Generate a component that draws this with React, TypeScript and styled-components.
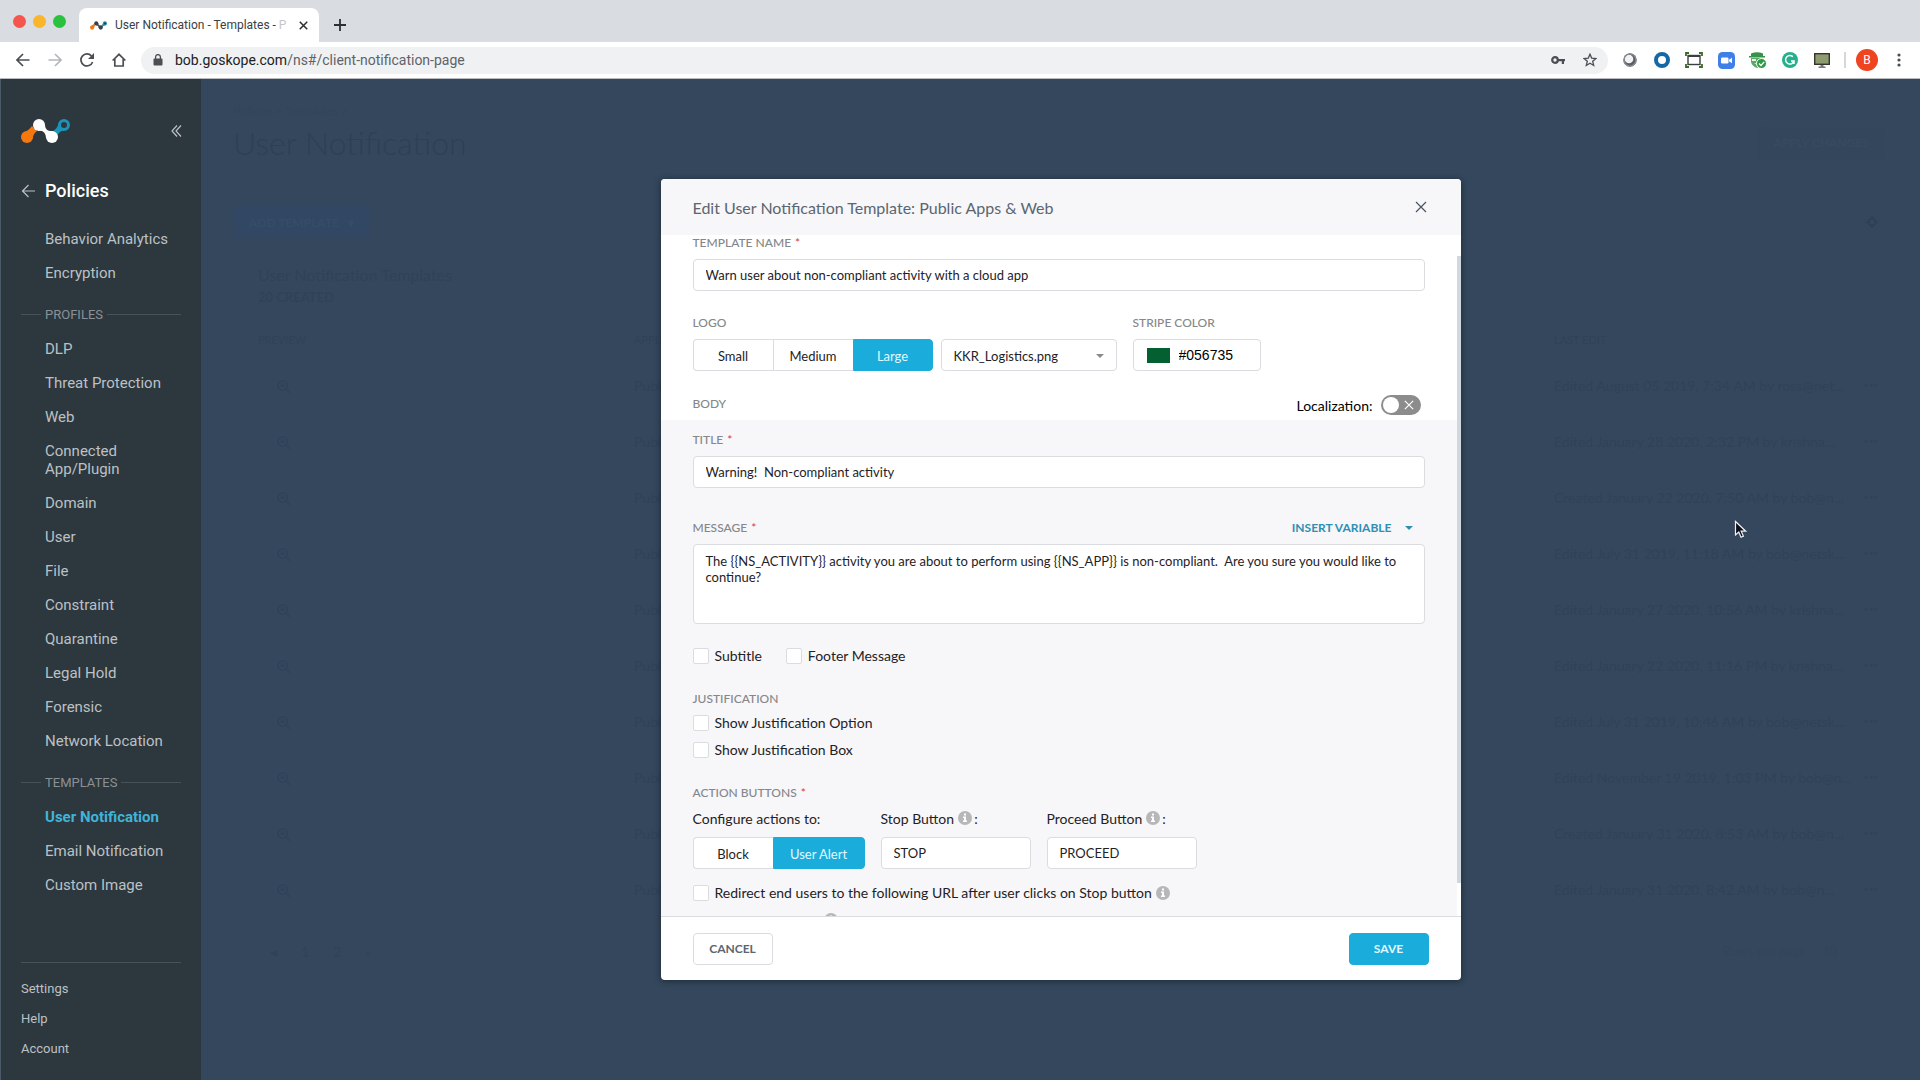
import React, { useLayoutEffect, useRef, useState } from "react";
import styled, { createGlobalStyle, css } from "styled-components";

const lato = `Lato, "Open Sans", sans-serif`;
const roboto = `Roboto, "Noto Sans", sans-serif`;

const GlobalStyle = createGlobalStyle`
  *, *::before, *::after { box-sizing: border-box; }
  body { margin: 0; font-family: ${lato}; background: #35475c; }
  button, input, select, textarea { font: inherit; color: inherit; margin: 0; }
  button { padding: 0; border: 0; background: none; cursor: pointer; }
  svg { display: block; flex: none; }
`;

const Page = styled.div`
  display: flex;
  flex-direction: column;
  min-height: 100vh;
`;

/* ---------- browser window ---------- */

const TabStrip = styled.div`
  display: flex;
  align-items: flex-end;
  height: 42px;
  padding-left: 13px;
  background: #d9dce1;
`;

const WindowButtons = styled.div`
  display: flex;
  gap: 7px;
  height: 42px;
  padding: 15px 13px 0 0;
`;

const WindowDot = styled.span<{ $color: string }>`
  width: 13px;
  height: 13px;
  border-radius: 50%;
  background: ${(p) => p.$color};
`;

const Tab = styled.div`
  display: flex;
  align-items: center;
  gap: 8px;
  width: 240px;
  height: 34px;
  padding: 0 8px 0 11px;
  border-radius: 8px 8px 0 0;
  background: #fff;
`;

const TabTitle = styled.span`
  flex: 1;
  overflow: hidden;
  white-space: nowrap;
  font: 12px/16px ${roboto};
  color: #3c4043;
  i { font-style: normal; color: #c4c6c9; }
`;

const TabAction = styled.button`
  display: grid;
  place-items: center;
  width: 16px;
  height: 34px;
`;

const NewTab = styled(TabAction)`
  margin-left: 13px;
`;

const Toolbar = styled.div`
  display: flex;
  align-items: center;
  height: 37px;
  padding: 0 13px 0 15px;
  border-bottom: 1px solid #b9bdc2;
  background: #fff;
`;

const ToolGroup = styled.div`
  display: flex;
  gap: 16px;
  margin-right: 14px;
`;

const ToolButton = styled.button`
  display: grid;
  place-items: center;
  width: 16px;
  height: 24px;
`;

const Address = styled.div`
  display: flex;
  flex: 1;
  align-items: center;
  gap: 12px;
  height: 27px;
  padding: 0 11px 0 12px;
  border-radius: 14px;
  background: #eff1f3;
`;

const Url = styled.span`
  flex: 1;
  font: 14px/20px ${roboto};
  color: #5f6368;
  b { font-weight: 400; color: #202124; }
`;

const AddressTools = styled.div`
  display: flex;
  align-items: center;
  gap: 18px;
`;

const Extensions = styled.div`
  display: flex;
  gap: 14px;
  margin-left: 13px;
`;

const ExtButton = styled.button`
  display: grid;
  place-items: center;
  width: 18px;
  height: 24px;
`;

const ToolDivider = styled.span`
  width: 2px;
  height: 16px;
  margin: 0 10px 0 13px;
  background: #d5d8db;
`;

const Avatar = styled.button`
  width: 22px;
  height: 22px;
  margin-right: 13px;
  border-radius: 50%;
  background: #ee4420;
  color: #fff;
  font: 12px/22px ${roboto};
`;

/* ---------- sidebar ---------- */

const Shell = styled.div`
  display: flex;
  flex: 1;
  padding-left: 1px;
  background: #4a5a68;
`;

const Sidebar = styled.nav`
  display: flex;
  flex-direction: column;
  width: 200px;
  padding: 39px 20px 16px;
  background: #2d373e;
  font-family: ${roboto};
  color: #bcc1c5;
`;

const SideTop = styled.div`
  display: flex;
  justify-content: space-between;
  align-items: center;
  height: 26px;
  margin-right: -2px;
`;

const SideTitle = styled.h2`
  display: flex;
  align-items: center;
  gap: 10px;
  margin: 35px 0 19px;
  font-size: 18px;
  line-height: 24px;
  font-weight: 500;
  color: #fff;
`;

const NavList = styled.ul`
  margin: 0;
  padding: 0;
  list-style: none;
`;

const NavLink = styled.a<{ $active?: boolean }>`
  display: block;
  padding: 8px 0 8px 24px;
  font-size: 15px;
  line-height: 18px;
  text-decoration: none;
  white-space: nowrap;
  color: inherit;
  ${(p) => p.$active && css`font-weight: 700; color: #40b4d8;`}
`;

const NavSection = styled.h3`
  display: flex;
  align-items: center;
  gap: 4px;
  height: 34px;
  margin: 7px 0 1px;
  font-size: 13px;
  font-weight: 400;
  color: #8a9196;
  &::before, &::after { content: ""; height: 1px; background: #46515a; }
  &::before { width: 20px; }
  &::after { flex: 1; }
`;

const SideFooter = styled.div`
  display: flex;
  flex-direction: column;
  margin-top: auto;
  padding-top: 11px;
  border-top: 1px solid #46515a;
`;

const FooterLink = styled.a`
  font-size: 13px;
  line-height: 30px;
  text-decoration: none;
  color: inherit;
`;

/* ---------- dimmed page behind the dialog ---------- */

const Main = styled.main`
  position: relative;
  flex: 1;
  padding: 24px 35px 0 32px;
  background: #35475c;
  color: #30425a;
`;

const Crumb = styled.div`
  font-size: 12px;
  line-height: 16px;
  color: #33455a;
`;

const PageHead = styled.div`
  display: flex;
  justify-content: space-between;
  align-items: center;
  height: 47px;
`;

const PageTitle = styled.h1`
  margin: 0;
  font-size: 32px;
  line-height: 46px;
  font-weight: 300;
  color: #2e4056;
`;

const GhostButton = styled.button<{ $bg: string; $ink: string }>`
  height: 32px;
  padding: 0 16px;
  border-radius: 3px;
  background: ${(p) => p.$bg};
  font-size: 12px;
  font-weight: 700;
  color: ${(p) => p.$ink};
`;

const Actions = styled.div`
  display: flex;
  justify-content: space-between;
  align-items: center;
  height: 32px;
  margin-top: 40px;
`;

const GearButton = styled.button`
  display: grid;
  place-items: center;
  width: 26px;
  height: 32px;
`;

const Panel = styled.section`
  padding: 25px 0 0 25px;
`;

const PanelTitle = styled.h2`
  margin: 0;
  font-size: 16px;
  line-height: 24px;
  font-weight: 400;
`;

const PanelCount = styled.div`
  font-size: 13px;
  line-height: 20px;
  font-weight: 700;
`;

const Table = styled.table`
  width: 100%;
  margin-top: 20px;
  border-collapse: collapse;
  table-layout: fixed;
`;

const Th = styled.th`
  height: 24px;
  padding: 0;
  font-size: 11px;
  font-weight: 400;
  text-align: left;
`;

const Td = styled.td<{ $kind?: "icon" | "menu" }>`
  height: 56px;
  padding: 12px 0 0;
  font-size: 14px;
  white-space: nowrap;
  vertical-align: middle;
  ${(p) => p.$kind === "icon" && css`padding: 15px 0 0 19px;`}
  ${(p) => p.$kind === "menu" && css`font-size: 8px;`}
`;

const Pager = styled.div`
  display: flex;
  align-items: center;
  gap: 24px;
  height: 40px;
  margin-top: 20px;
  padding: 0 48px 0 12px;
  font-size: 14px;
`;

const PagerEnd = styled.div`
  display: flex;
  gap: 16px;
  margin-left: auto;
  font-size: 13px;
  color: #33455a;
`;

const Cursor = styled.svg`
  position: absolute;
  left: 1533px;
  top: 441px;
  z-index: 2;
`;

/* ---------- dialog ---------- */

const Overlay = styled.div`
  position: absolute;
  inset: 0;
  display: flex;
  align-items: center;
  justify-content: center;
`;

const Dialog = styled.section`
  display: flex;
  flex-direction: column;
  width: 800px;
  max-width: 96%;
  height: calc(100vh - 279px);
  overflow: hidden;
  border-radius: 4px;
  background: #fff;
  box-shadow: 0 1px 6px rgba(10, 18, 30, 0.6);
  color: #1f2225;
`;

const DialogHead = styled.header`
  display: flex;
  align-items: center;
  justify-content: space-between;
  height: 56px;
  flex: none;
  padding: 0 34px 0 32px;
  background: #f7f6f9;
`;

const DialogTitle = styled.h2`
  margin: 0;
  padding-top: 2px;
  font-size: 16px;
  line-height: 24px;
  font-weight: 400;
  color: #5b6670;
`;

const BodyFrame = styled.div`
  position: relative;
  flex: 1;
  min-height: 0;
  padding-right: 4px;
`;

const Scroller = styled.div`
  height: 100%;
  overflow-y: auto;
  scrollbar-width: none;
  background: #f7f6f9;
  &::-webkit-scrollbar { display: none; }
`;

const Thumb = styled.span`
  position: absolute;
  right: 0;
  width: 4px;
  background: #d1d7de;
`;

const Section = styled.div<{ $white?: boolean }>`
  padding: ${(p) => (p.$white ? "22px 32px 5px" : "11px 32px 21px")};
  background: ${(p) => (p.$white ? "#fff" : "#f7f6f9")};
`;

const Row = styled.div<{ $top?: number; $gap?: number; $spread?: boolean; $align?: string }>`
  display: flex;
  align-items: ${(p) => p.$align || "center"};
  justify-content: ${(p) => (p.$spread ? "space-between" : "flex-start")};
  gap: ${(p) => p.$gap || 0}px;
  margin-top: ${(p) => p.$top || 0}px;
`;

const Column = styled.div`
  display: flex;
  flex-direction: column;
`;

const caption = css`
  display: block;
  font-size: 12px;
  line-height: 18px;
  font-weight: 500;
  color: #85878a;
`;

const Caption = styled.label`${caption}`;
const Heading = styled.h3`${caption} margin: 0;`;

const Star = styled.span`
  margin-left: 4px;
  color: #e0434b;
`;

const box = css`
  border: 1px solid #dbdce0;
  border-radius: 4px;
  background: #fff;
`;

const TextField = styled.input<{ $width?: string; $top?: number }>`
  ${box}
  display: block;
  width: ${(p) => p.$width || "100%"};
  height: 32px;
  margin-top: ${(p) => p.$top || 7}px;
  padding: 0 12px;
  font-size: 13px;
`;

const TextArea = styled.textarea`
  ${box}
  display: block;
  width: 100%;
  height: 80px;
  margin-top: 7px;
  padding: 8px 12px;
  font-size: 13px;
  line-height: 16px;
  resize: none;
`;

const Segments = styled.div`
  display: flex;
  height: 32px;
`;

const Segment = styled.button<{ $on?: boolean; $width?: number }>`
  width: ${(p) => p.$width || 80}px;
  padding-top: 1px;
  border: 1px solid ${(p) => (p.$on ? "#1aacda" : "#dbdce0")};
  border-left-width: ${(p) => (p.$on ? 1 : 0)}px;
  border-right-width: ${(p) => (p.$on ? 1 : 0)}px;
  background: ${(p) => (p.$on ? "#1aacda" : "#fff")};
  font-size: 13px;
  color: ${(p) => (p.$on ? "#e3f8ff" : "inherit")};
  & + & { border-left-width: 1px; }
  &:first-child { border-left-width: 1px; border-radius: 4px 0 0 4px; }
  &:last-child { border-radius: 0 4px 4px 0; }
`;

const SelectWrap = styled.div`
  position: relative;
  width: 176px;
  svg { position: absolute; right: 13px; top: 15px; pointer-events: none; }
`;

const Select = styled.select`
  ${box}
  width: 100%;
  height: 32px;
  padding: 1px 12px 0;
  font-size: 13px;
  appearance: none;
`;

const ColorField = styled.div`
  ${box}
  display: flex;
  align-items: center;
  gap: 9px;
  width: 128px;
  height: 32px;
  margin-top: 7px;
  padding: 0 13px;
`;

const Swatch = styled.span<{ $color: string }>`
  width: 23px;
  height: 15px;
  flex: none;
  background: ${(p) => p.$color};
`;

const HexInput = styled.input`
  width: 100%;
  min-width: 0;
  padding: 0;
  border: 0;
  font: 14px/20px "Liberation Sans", sans-serif;
  color: #000;
`;

const ToggleLabel = styled.label`
  display: flex;
  align-items: center;
  gap: 8px;
  height: 20px;
  margin-right: 4px;
  font-size: 14px;
  color: #000;
`;

const Toggle = styled.span`
  position: relative;
  display: flex;
  align-items: center;
  justify-content: flex-end;
  width: 40px;
  height: 20px;
  padding-right: 7px;
  border-radius: 10px;
  background: #8c8c8c;
  input { position: absolute; inset: 0; opacity: 0; }
  &::before {
    content: "";
    position: absolute;
    left: 2px;
    top: 2px;
    width: 16px;
    height: 16px;
    border-radius: 50%;
    background: #fff;
  }
`;

const InsertButton = styled.button`
  display: flex;
  align-items: center;
  gap: 13px;
  margin-right: 12px;
  font-size: 12px;
  line-height: 18px;
  font-weight: 700;
  color: #2f8fb3;
`;

const CheckLabel = styled.label`
  display: flex;
  align-items: center;
  gap: 6px;
  font-size: 14px;
  line-height: 20px;
`;

const Checkbox = styled.input.attrs({ type: "checkbox" })`
  width: 16px;
  height: 16px;
  appearance: none;
  border: 1px solid #dbdce0;
  border-radius: 2px;
  background: #fff;
`;

const FieldLabel = styled.label`
  display: flex;
  align-items: center;
  height: 20px;
  font-size: 14px;
  line-height: 20px;
  svg { margin: 0 2px 3px 4px; }
`;

const DialogFoot = styled.footer`
  display: flex;
  align-items: center;
  justify-content: space-between;
  flex: none;
  height: 64px;
  padding: 0 32px;
  border-top: 1px solid #dbdce0;
`;

const FootButton = styled.button<{ $primary?: boolean }>`
  width: 80px;
  height: 32px;
  border: 1px solid ${(p) => (p.$primary ? "#1aacda" : "#dbdce0")};
  border-radius: 4px;
  background: ${(p) => (p.$primary ? "#1aacda" : "#fff")};
  font-size: 12px;
  font-weight: 700;
  color: ${(p) => (p.$primary ? "#e3f8ff" : "#5b6670")};
`;

/* ---------- drawings ---------- */

const Logo = ({ width = 49, height = 26, middle = "#fff" }) => (
  <svg width={width} height={height} viewBox="0 0 49 26" aria-hidden="true">
    <path d="M1.500 15.500C6 13 9 11 11 8l5 5c-3 2-4 5-5 9z" fill="#f5780f" />
    <circle cx="6" cy="19" r="6" fill="#f5780f" />
    <path d="M46 12c-5 0-8 2-10 6l-4.500-4.500c3-2 5-4 6-8z" fill="#1c93b8" />
    <circle cx="43" cy="7" r="4.500" fill="#2d373e" stroke="#1c93b8" strokeWidth="3" />
    <path d="M24 6.500c0 5 3 7 8 6.500l-7 7c0-5-3-8-8-7.500z" fill={middle} />
    <circle cx="18" cy="7" r="6" fill={middle} />
    <circle cx="31" cy="19" r="6" fill={middle} />
  </svg>
);

const Cross = ({ size = 12, color = "#3c4043", weight = 1.5 }) => (
  <svg width={size} height={size} viewBox="0 0 12 12" fill="none" stroke={color} strokeWidth={weight}>
    <path d="M1 1l10 10M11 1L1 11" />
  </svg>
);

const Caret = ({ color = "#8a8a8a" }) => (
  <svg width="8" height="4" viewBox="0 0 8 4" fill={color}><path d="M0 0h8L4 4z" /></svg>
);

const Info = () => (
  <svg width="14" height="14" viewBox="0 0 14 14" aria-hidden="true">
    <circle cx="7" cy="7" r="7" fill="#b7b7b9" />
    <path d="M6 2.600h2v2H6zM5 5.600h3v4h1v1.400H5V9.600h1V7H5z" fill="#fff" />
  </svg>
);

const Magnifier = () => (
  <svg width="14" height="14" viewBox="0 0 14 14" fill="none" stroke="#2f415a" strokeWidth="1.200">
    <circle cx="5.500" cy="5.500" r="4.800" />
    <path d="M9 9l4 4M3 5.500h5M5.500 3v5" />
  </svg>
);

const lineIcon = { fill: "none", stroke: "#4b4f54", strokeWidth: 1.7 };

const BackIcon = () => (
  <svg width="14" height="14" viewBox="0 0 14 14" {...lineIcon}><path d="M13.500 7H1.500M7 1L1 7l6 6" /></svg>
);
const ForwardIcon = () => (
  <svg width="14" height="14" viewBox="0 0 14 14" {...lineIcon} stroke="#b4b7ba"><path d="M.5 7h12M7 1l6 6-6 6" /></svg>
);
const ReloadIcon = () => (
  <svg width="14" height="14" viewBox="0 0 14 14" {...lineIcon}>
    <path d="M12.600 9A6 6 0 1 1 11.500 3" /><path d="M14 0v6H8z" fill="#4b4f54" stroke="none" />
  </svg>
);
const HomeIcon = () => (
  <svg width="14" height="14" viewBox="0 0 14 14" {...lineIcon}><path d="M.6 7.500L7 1.300l6.400 6.200M2.800 6v7h8.400V6" /></svg>
);
const LockIcon = () => (
  <svg width="10" height="12" viewBox="0 0 10 12">
    <rect x="0.500" y="4.500" width="9" height="7" rx="1" fill="#4b4f54" />
    <path d="M2.600 5V3a2.400 2.400 0 0 1 4.800 0v2" fill="none" stroke="#4b4f54" strokeWidth="1.300" />
  </svg>
);
const KeyIcon = () => (
  <svg width="14" height="8" viewBox="0 0 14 8">
    <circle cx="4" cy="4" r="2.800" fill="none" stroke="#4b4f54" strokeWidth="2.200" />
    <path d="M6.500 3H14v2.200h-1V8h-2.200V5.200H6.500z" fill="#4b4f54" />
  </svg>
);
const StarIcon = () => (
  <svg width="14" height="14" viewBox="0 0 14 14" fill="none" stroke="#4b4f54" strokeWidth="1.300">
    <path d="M7 1.200l1.700 3.900 4.200.4-3.200 2.800 1 4.200L7 10.300l-3.700 2.200 1-4.200L1.100 5.500l4.200-.4z" />
  </svg>
);

const extensionIcons: { name: string; art: React.ReactNode }[] = [
  {
    name: "Sphere",
    art: (
      <svg width="14" height="14" viewBox="0 0 14 14">
        <circle cx="7" cy="7" r="6.700" fill="#5a5d61" />
        <circle cx="6" cy="6" r="4.300" fill="#f1f2f3" />
        <circle cx="7" cy="7" r="6" fill="none" stroke="#8c8f93" strokeWidth="1.200" />
      </svg>
    ),
  },
  {
    name: "Ring",
    art: (
      <svg width="16" height="16" viewBox="0 0 16 16">
        <circle cx="8" cy="8" r="6" fill="none" stroke="#1468a5" strokeWidth="4" />
      </svg>
    ),
  },
  {
    name: "Capture",
    art: (
      <svg width="18" height="16" viewBox="0 0 18 16" fill="none">
        <rect x="3" y="3.500" width="12" height="9" stroke="#3b3f42" strokeWidth="1.400" />
        <path d="M3 4h12" stroke="#3b3f42" strokeWidth="2" />
        <path d="M1 4V1h3M14 1h3v3M17 12v3h-3M4 15H1v-3" stroke="#3d6b2a" strokeWidth="1.800" />
      </svg>
    ),
  },
  {
    name: "Video",
    art: (
      <svg width="17" height="17" viewBox="0 0 17 17">
        <rect width="17" height="17" rx="4.500" fill="#3f7fe8" />
        <rect x="3" y="5.500" width="7.500" height="6" rx="1.200" fill="#fff" />
        <path d="M11 7.700l3-2v5.600l-3-2z" fill="#fff" />
      </svg>
    ),
  },
  {
    name: "Guard",
    art: (
      <svg width="18" height="17" viewBox="0 0 18 17">
        <path d="M2 1.500Q8 -1 14 1.500V4H2zM0 4h16v1.500H0z" fill="#36914a" />
        <path d="M2 6h12v4q-1 4-6 6-5-2-6-6z" fill="#5aa868" />
        <path d="M3 7h4v2H3zM9 7h4v2H9zM5 11h4v2z" fill="#e9f5ec" />
        <circle cx="12.500" cy="11.500" r="5" fill="#2f9a46" stroke="#fff" />
        <path d="M10 11.500l2 2 3.200-3.600" fill="none" stroke="#fff" strokeWidth="1.400" />
      </svg>
    ),
  },
  {
    name: "Grammar",
    art: (
      <svg width="16" height="16" viewBox="0 0 16 16">
        <circle cx="8" cy="8" r="8" fill="#25b08c" />
        <path d="M10.800 4.600A4.300 4.300 0 1 0 12 9H9M12 9v3" fill="none" stroke="#fff" strokeWidth="1.500" />
      </svg>
    ),
  },
  {
    name: "Monitor",
    art: (
      <svg width="16" height="15" viewBox="0 0 16 15">
        <rect x="0.700" y="0.700" width="14.600" height="10.600" fill="#8e9b6e" stroke="#38352f" strokeWidth="1.400" />
        <path d="M6.500 12h3v1.500h2V15h-7v-1.500h2z" fill="#77797b" />
      </svg>
    ),
  },
];

/* ---------- data ---------- */

const topLinks = ["Behavior Analytics", "Encryption"];
const profileLinks = [
  "DLP", "Threat Protection", "Web", "Connected\nApp/Plugin", "Domain", "User", "File",
  "Constraint", "Quarantine", "Legal Hold", "Forensic", "Network Location",
];
const templateLinks = ["User Notification", "Email Notification", "Custom Image"];

const edits = [
  "Edited August 05 2019, 7:34 AM by ross@net...",
  "Edited January 28 2020, 2:32 PM by krishna...",
  "Created January 22 2020, 7:50 AM by bob@n...",
  "Edited July 31 2019, 11:18 AM by bob@netsk...",
  "Edited January 27 2020, 10:56 AM by krishna...",
  "Edited January 22 2020, 11:16 PM by krishna...",
  "Edited July 31 2019, 10:46 AM by bob@netsk...",
  "Edited November 19 2019, 1:03 PM by bob@n...",
  "Created January 31 2020, 8:53 AM by bob@n...",
  "Edited January 31 2020, 8:42 AM by bob@n...",
];

const NavItems = ({ items, active }: { items: string[]; active?: string }) => (
  <NavList>
    {items.map((item) => (
      <li key={item}>
        <NavLink href="#" $active={item === active}>
          {item.split("\n").map((line, i) => (
            <React.Fragment key={line}>{i > 0 && <br />}{line}</React.Fragment>
          ))}
        </NavLink>
      </li>
    ))}
  </NavList>
);

const Check = ({ children }: { children: React.ReactNode }) => (
  <CheckLabel><Checkbox />{children}</CheckLabel>
);

const Browser = () => (
  <header>
    <TabStrip>
      <WindowButtons>
        <WindowDot $color="#f4564f" />
        <WindowDot $color="#f9b52c" />
        <WindowDot $color="#2cc03f" />
      </WindowButtons>
      <Tab>
        <Logo width={17} height={9} middle="#3a4046" />
        <TabTitle>User Notification - Templates - <i>P</i></TabTitle>
        <TabAction aria-label="Close tab"><Cross size={9} weight={2} color="#2c2f33" /></TabAction>
      </Tab>
      <NewTab aria-label="New tab">
        <svg width="12" height="12" viewBox="0 0 12 12" stroke="#2c2f33" strokeWidth="1.800"><path d="M6 0v12M0 6h12" /></svg>
      </NewTab>
    </TabStrip>
    <Toolbar>
      <ToolGroup>
        <ToolButton aria-label="Back"><BackIcon /></ToolButton>
        <ToolButton aria-label="Forward"><ForwardIcon /></ToolButton>
        <ToolButton aria-label="Reload"><ReloadIcon /></ToolButton>
        <ToolButton aria-label="Home"><HomeIcon /></ToolButton>
      </ToolGroup>
      <Address>
        <LockIcon />
        <Url><b>bob.goskope.com</b>/ns#/client-notification-page</Url>
        <AddressTools><KeyIcon /><StarIcon /></AddressTools>
      </Address>
      <Extensions>
        {extensionIcons.map((e) => <ExtButton key={e.name} aria-label={e.name}>{e.art}</ExtButton>)}
      </Extensions>
      <ToolDivider />
      <Avatar>B</Avatar>
      <ToolButton aria-label="Menu">
        <svg width="4" height="14" viewBox="0 0 4 14" fill="#4b4f54">
          <circle cx="2" cy="2" r="1.600" /><circle cx="2" cy="7" r="1.600" /><circle cx="2" cy="12" r="1.600" />
        </svg>
      </ToolButton>
    </Toolbar>
  </header>
);

const SideNav = () => (
  <Sidebar>
    <SideTop>
      <Logo />
      <button aria-label="Collapse menu">
        <svg width="12" height="12" viewBox="0 0 12 12" fill="none" stroke="#bcc1c5" strokeWidth="1.200">
          <path d="M6 .5L1 6l5 5.500M10 .5L5 6l5 5.500" />
        </svg>
      </button>
    </SideTop>
    <SideTitle>
      <svg width="14" height="14" viewBox="0 0 14 14" fill="none" stroke="#bcc1c5" strokeWidth="1.200">
        <path d="M14 7H1.500M7.500 1l-6 6 6 6" />
      </svg>
      Policies
    </SideTitle>
    <NavItems items={topLinks} />
    <NavSection>PROFILES</NavSection>
    <NavItems items={profileLinks} />
    <NavSection>TEMPLATES</NavSection>
    <NavItems items={templateLinks} active="User Notification" />
    <SideFooter>
      <FooterLink href="#">Settings</FooterLink>
      <FooterLink href="#">Help</FooterLink>
      <FooterLink href="#">Account</FooterLink>
    </SideFooter>
  </Sidebar>
);

const TemplateDialog = () => {
  const scroller = useRef<HTMLDivElement>(null);
  const [thumb, setThumb] = useState({ top: 0, height: 0 });

  const measure = () => {
    const el = scroller.current;
    if (!el) return;
    const ratio = el.clientHeight / el.scrollHeight;
    setThumb({ top: Math.round(el.scrollTop * ratio), height: Math.round(el.clientHeight * ratio) });
  };

  useLayoutEffect(() => {
    if (scroller.current) scroller.current.scrollTop = 23;
    measure();
  }, []);

  return (
    <Overlay>
      <Dialog role="dialog" aria-labelledby="dialog-title">
        <DialogHead>
          <DialogTitle id="dialog-title">Edit User Notification Template: Public Apps &amp; Web</DialogTitle>
          <button aria-label="Close"><Cross weight={1.2} color="#4b555f" /></button>
        </DialogHead>
        <BodyFrame>
          <Scroller ref={scroller} onScroll={measure}>
            <Section $white>
              <Caption htmlFor="name">TEMPLATE NAME<Star>*</Star></Caption>
              <TextField id="name" defaultValue="Warn user about non-compliant activity with a cloud app" />
              <Row $top={23} $gap={16} $align="flex-start">
                <Column>
                  <Caption htmlFor="logo">LOGO</Caption>
                  <Row $top={7} $gap={8}>
                    <Segments>
                      <Segment>Small</Segment>
                      <Segment>Medium</Segment>
                      <Segment $on>Large</Segment>
                    </Segments>
                    <SelectWrap>
                      <Select id="logo"><option>KKR_Logistics.png</option></Select>
                      <Caret />
                    </SelectWrap>
                  </Row>
                </Column>
                <Column>
                  <Caption htmlFor="stripe">STRIPE COLOR</Caption>
                  <ColorField>
                    <Swatch $color="#045f31" />
                    <HexInput id="stripe" defaultValue="#056735" />
                  </ColorField>
                </Column>
              </Row>
              <Row $top={24} $spread $align="flex-start">
                <Heading>BODY</Heading>
                <ToggleLabel>
                  Localization:
                  <Toggle>
                    <input type="checkbox" role="switch" />
                    <Cross size={10} color="#fff" weight={1.4} />
                  </Toggle>
                </ToggleLabel>
              </Row>
            </Section>
            <Section>
              <Caption htmlFor="title">TITLE<Star>*</Star></Caption>
              <TextField id="title" defaultValue={"Warning!  Non-compliant activity"} />
              <Row $top={31} $spread>
                <Caption htmlFor="message">MESSAGE<Star>*</Star></Caption>
                <InsertButton>INSERT VARIABLE<Caret color="#2f8fb3" /></InsertButton>
              </Row>
              <TextArea
                id="message"
                defaultValue={"The {{NS_ACTIVITY}} activity you are about to perform using {{NS_APP}} is non-compliant.  Are you sure you would like to continue?"}
              />
              <Row $top={22} $gap={24}>
                <Check>Subtitle</Check>
                <Check>Footer Message</Check>
              </Row>
              <Row $top={24}><Heading>JUSTIFICATION</Heading></Row>
              <Row $top={5}><Check>Show Justification Option</Check></Row>
              <Row $top={7}><Check>Show Justification Box</Check></Row>
              <Row $top={24}><Heading>ACTION BUTTONS<Star>*</Star></Heading></Row>
              <Row $top={7} $gap={16} $align="flex-start">
                <Column>
                  <FieldLabel as="span">Configure actions to:</FieldLabel>
                  <Row $top={8}>
                    <Segments>
                      <Segment>Block</Segment>
                      <Segment $on $width={92}>User Alert</Segment>
                    </Segments>
                  </Row>
                </Column>
                <Column>
                  <FieldLabel htmlFor="stop">Stop Button<Info />:</FieldLabel>
                  <TextField id="stop" $width="150px" $top={8} defaultValue="STOP" />
                </Column>
                <Column>
                  <FieldLabel htmlFor="proceed">Proceed Button<Info />:</FieldLabel>
                  <TextField id="proceed" $width="150px" $top={8} defaultValue="PROCEED" />
                </Column>
              </Row>
              <Row $top={14} $gap={4}>
                <Check>Redirect end users to the following URL after user clicks on Stop button</Check>
                <Info />
              </Row>
              <Row $top={8}><FieldLabel as="span">Notification Timeout<Info />:</FieldLabel></Row>
            </Section>
          </Scroller>
          <Thumb style={thumb} />
        </BodyFrame>
        <DialogFoot>
          <FootButton>CANCEL</FootButton>
          <FootButton $primary>SAVE</FootButton>
        </DialogFoot>
      </Dialog>
    </Overlay>
  );
};

export default function App() {
  return (
    <Page>
      <GlobalStyle />
      <Browser />
      <Shell>
        <SideNav />
        <Main>
          <Crumb>Policies &gt; Templates &gt;</Crumb>
          <PageHead>
            <PageTitle>User Notification</PageTitle>
            <GhostButton $bg="#34465b" $ink="#374a60">APPLY CHANGES</GhostButton>
          </PageHead>
          <Actions>
            <GhostButton $bg="#314763" $ink="#364d69">ADD TEMPLATE &nbsp; ▾</GhostButton>
            <GearButton aria-label="Table settings">
              <svg width="12" height="12" viewBox="0 0 12 12" fill="none" stroke="#2f4056" strokeWidth="2">
                <circle cx="6" cy="6" r="3.500" />
                <path d="M6 0v2M6 10v2M0 6h2M10 6h2" />
              </svg>
            </GearButton>
          </Actions>
          <Panel>
            <PanelTitle>User Notification Templates</PanelTitle>
            <PanelCount>20 CREATED</PanelCount>
            <Table>
              <colgroup>
                <col width="376" />
                <col />
                <col width="310" />
                <col width="21" />
              </colgroup>
              <thead>
                <tr><Th>PREVIEW</Th><Th>APPLIED TO</Th><Th>LAST EDIT</Th><Th /></tr>
              </thead>
              <tbody>
                {edits.map((edit) => (
                  <tr key={edit}>
                    <Td $kind="icon"><Magnifier /></Td>
                    <Td>Public Apps &amp; Web</Td>
                    <Td>{edit}</Td>
                    <Td $kind="menu">•••</Td>
                  </tr>
                ))}
              </tbody>
            </Table>
            <Pager>
              <span>◂</span><span>1</span><span>2</span><span>»</span>
              <PagerEnd><span>Rows per page</span><span>10</span></PagerEnd>
            </Pager>
          </Panel>
          <TemplateDialog />
          <Cursor width="14" height="19" viewBox="0 0 14 19">
            <path d="M1.500 1.500v13.500l3.300-3 2.200 5.200 2.400-1-2.200-5h4.500z" fill="#0b0f18" stroke="#f0f2f6" strokeWidth="1.200" />
          </Cursor>
        </Main>
      </Shell>
    </Page>
  );
}
